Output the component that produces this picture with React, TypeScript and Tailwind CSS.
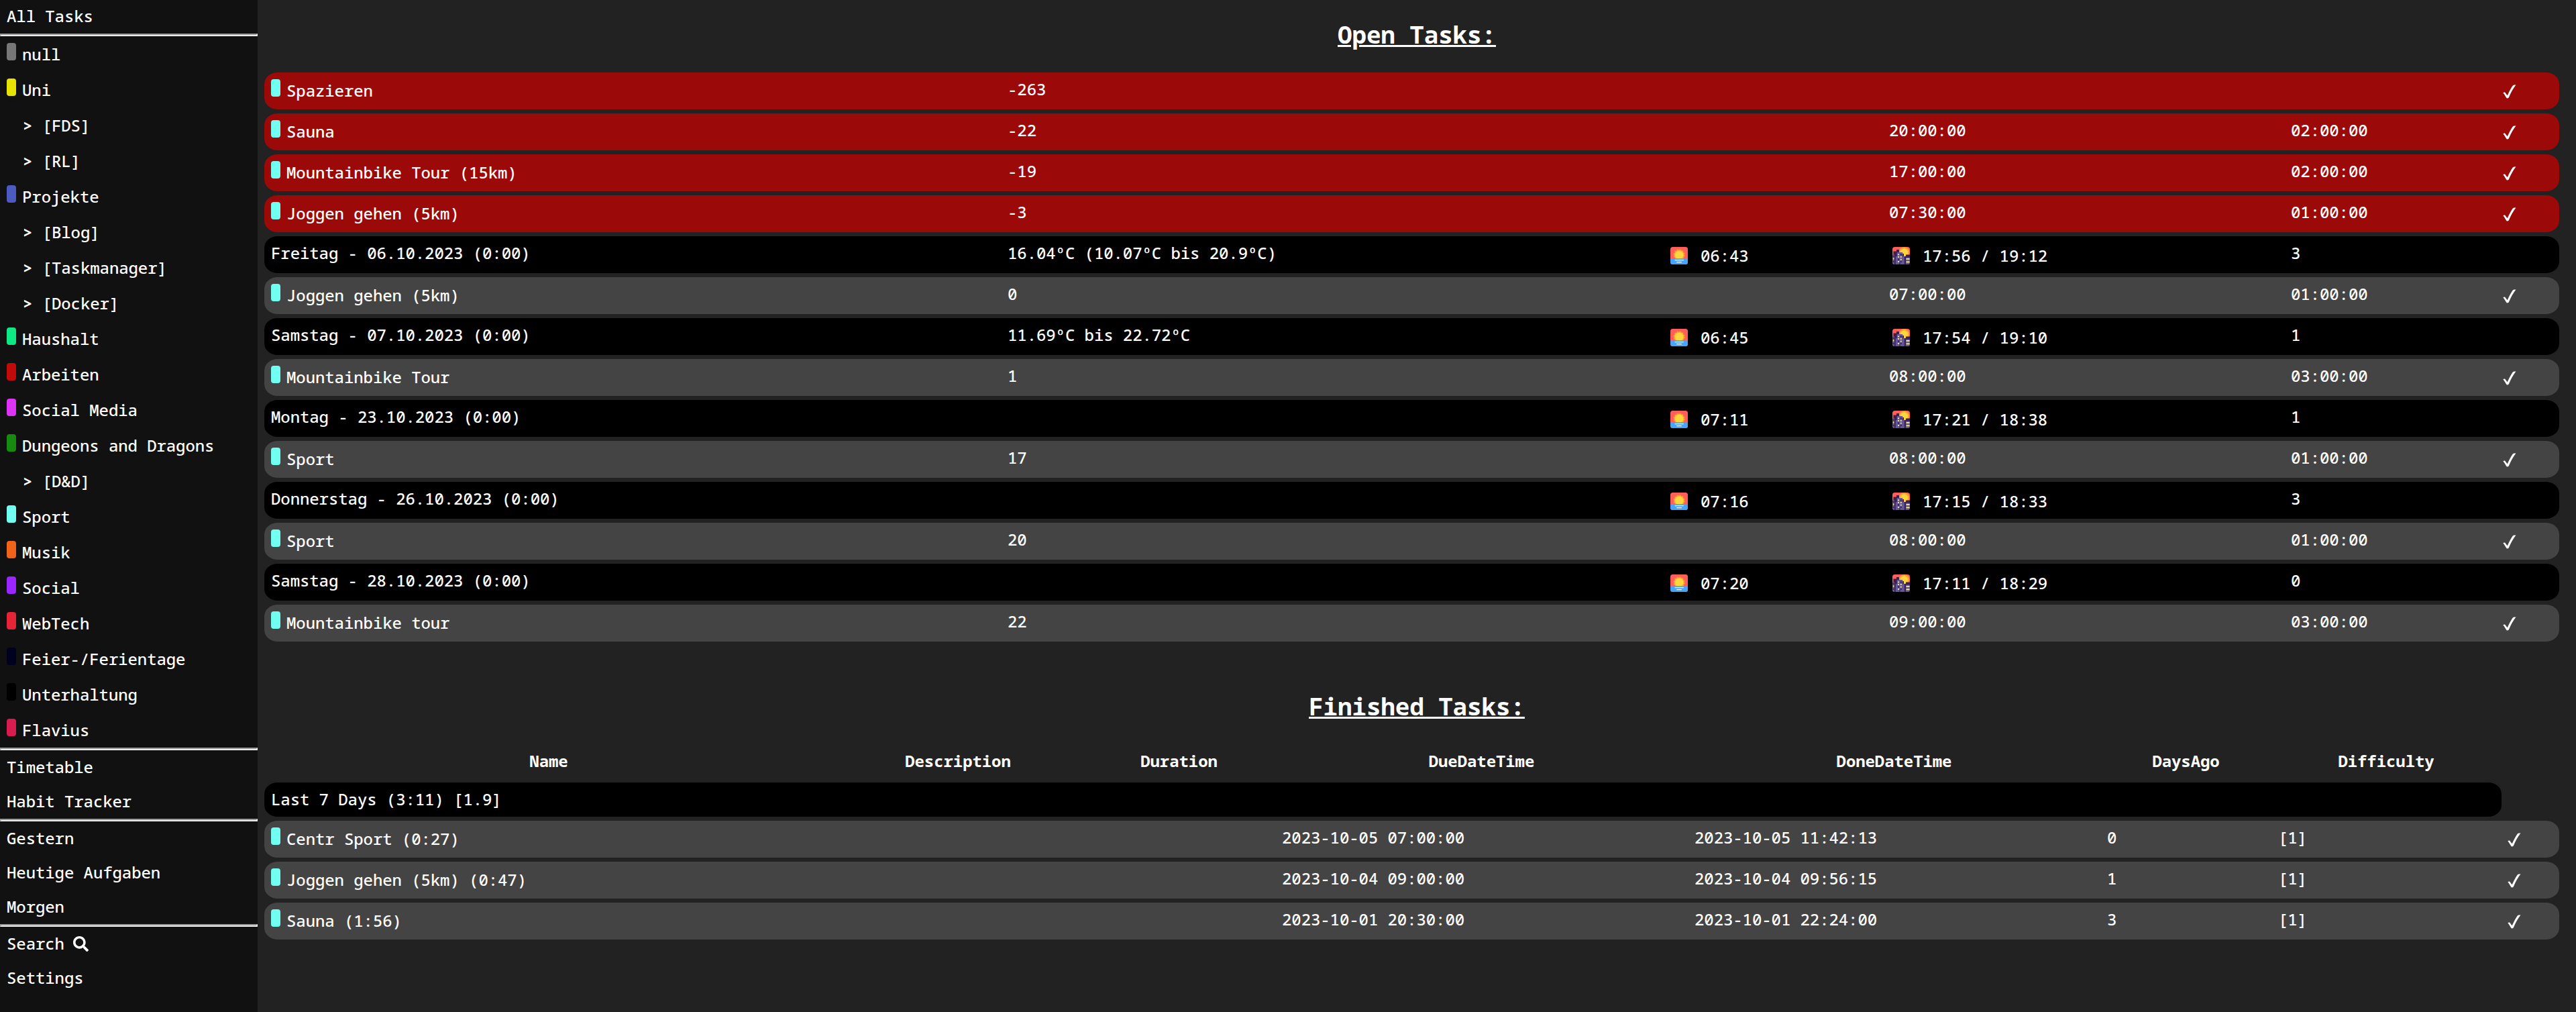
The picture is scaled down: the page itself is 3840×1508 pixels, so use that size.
import type { ReactNode } from "react";
import { FaSearch } from "react-icons/fa";

const SPORT = "bg-[#70fff0]";

type Category = { label: string; color?: string };

const categories: Category[] = [
  { label: "null", color: "bg-[#777777]" },
  { label: "Uni", color: "bg-[#e8e400]" },
  { label: "[FDS]" },
  { label: "[RL]" },
  { label: "Projekte", color: "bg-[#4b5bc0]" },
  { label: "[Blog]" },
  { label: "[Taskmanager]" },
  { label: "[Docker]" },
  { label: "Haushalt", color: "bg-[#0ee884]" },
  { label: "Arbeiten", color: "bg-[#c20a0a]" },
  { label: "Social Media", color: "bg-[#dd33f5]" },
  { label: "Dungeons and Dragons", color: "bg-[#178a10]" },
  { label: "[D&D]" },
  { label: "Sport", color: SPORT },
  { label: "Musik", color: "bg-[#f2631a]" },
  { label: "Social", color: "bg-[#9b26ff]" },
  { label: "WebTech", color: "bg-[#e62437]" },
  { label: "Feier-/Ferientage", color: "bg-[#00001f]" },
  { label: "Unterhaltung", color: "bg-black" },
  { label: "Flavius", color: "bg-[#d91c50]" },
];

type Open =
  | { kind: "late" | "task"; name: string; days: string; time?: string; duration?: string }
  | { kind: "day"; name: string; weather?: string; sunrise: string; sunset: string; count: string };

const open: Open[] = [
  { kind: "late", name: "Spazieren", days: "-263" },
  { kind: "late", name: "Sauna", days: "-22", time: "20:00:00", duration: "02:00:00" },
  { kind: "late", name: "Mountainbike Tour (15km)", days: "-19", time: "17:00:00", duration: "02:00:00" },
  { kind: "late", name: "Joggen gehen (5km)", days: "-3", time: "07:30:00", duration: "01:00:00" },
  { kind: "day", name: "Freitag - 06.10.2023 (0:00)", weather: "16.04ºC (10.07ºC bis 20.9ºC)", sunrise: "06:43", sunset: "17:56 / 19:12", count: "3" },
  { kind: "task", name: "Joggen gehen (5km)", days: "0", time: "07:00:00", duration: "01:00:00" },
  { kind: "day", name: "Samstag - 07.10.2023 (0:00)", weather: "11.69ºC bis 22.72ºC", sunrise: "06:45", sunset: "17:54 / 19:10", count: "1" },
  { kind: "task", name: "Mountainbike Tour", days: "1", time: "08:00:00", duration: "03:00:00" },
  { kind: "day", name: "Montag - 23.10.2023 (0:00)", sunrise: "07:11", sunset: "17:21 / 18:38", count: "1" },
  { kind: "task", name: "Sport", days: "17", time: "08:00:00", duration: "01:00:00" },
  { kind: "day", name: "Donnerstag - 26.10.2023 (0:00)", sunrise: "07:16", sunset: "17:15 / 18:33", count: "3" },
  { kind: "task", name: "Sport", days: "20", time: "08:00:00", duration: "01:00:00" },
  { kind: "day", name: "Samstag - 28.10.2023 (0:00)", sunrise: "07:20", sunset: "17:11 / 18:29", count: "0" },
  { kind: "task", name: "Mountainbike tour", days: "22", time: "09:00:00", duration: "03:00:00" },
];

const finished = [
  { name: "Centr Sport (0:27)", due: "2023-10-05 07:00:00", done: "2023-10-05 11:42:13", ago: "0" },
  { name: "Joggen gehen (5km) (0:47)", due: "2023-10-04 09:00:00", done: "2023-10-04 09:56:15", ago: "1" },
  { name: "Sauna (1:56)", due: "2023-10-01 20:30:00", done: "2023-10-01 22:24:00", ago: "3" },
];

const headers = ["Name", "Description", "Duration", "DueDateTime", "DoneDateTime", "DaysAgo", "Difficulty"];

const finishedCols = "grid grid-cols-[848px_372px_287px_615px_615px_255px_342px_1fr]";
const rowBase = "border-y-[3px] border-[#222222] rounded-[20px]";

function Divider() {
  return <div className="h-1 border-2 border-t-[#9a9a9a] border-l-[#9a9a9a] border-r-[#ededed] border-b-[#ededed]" />;
}

function Pill({ color }: { color: string }) {
  return <span className={`mt-[10px] mr-[9px] h-[26px] w-[14px] shrink-0 rounded-[4px] ${color}`} />;
}

function SideLink({ children }: { children: ReactNode }) {
  return <div className="flex h-[51px] items-start pl-[10px] leading-[49px]">{children}</div>;
}

function Heading({ children }: { children: ReactNode }) {
  return (
    <h1 className="-mr-[15px] text-center text-[36px] leading-[49px] font-bold tracking-[-0.15px] underline decoration-[3px] underline-offset-2">
      {children}
    </h1>
  );
}

function Check() {
  return (
    <svg width="20" height="21" viewBox="0 0 20 21" className="mt-[18px] ml-[10px]" fill="#fff">
      <path d="M.4 12.6C1.2 11.3 3.2 11.2 4.1 12.9L6.7 16.3C9.2 10.6 11.8 5.9 14.4 2C15.4.6 16.7.4 19.4.5C15.2 6 12 11.6 9.3 18.3C8.4 20.9 6 21.2 4.9 19.3C3.5 16.8 2.3 14.6.4 12.6Z" />
    </svg>
  );
}

function Sunrise() {
  return (
    <svg width="26" height="26" viewBox="0 0 26 26" className="mt-4 shrink-0">
      <clipPath id="riseClip">
        <rect width="26" height="26" rx="3.5" />
      </clipPath>
      <g clipPath="url(#riseClip)">
        <rect width="26" height="26" fill="#ff5f58" />
        <circle cx="13" cy="12" r="7.6" fill="none" stroke="#ffa032" strokeWidth="1.8" strokeDasharray="2.6 1.4" />
        <circle cx="13" cy="12" r="7.4" fill="#ffb02e" />
        <circle cx="13" cy="12" r="6.2" fill="#fcd53f" />
        <rect y="17.3" width="26" height="9" fill="#46a4fb" />
        <path d="M7 19.6h12.4M9.6 22.6h6.8" stroke="#f4f4f4" strokeWidth="1.1" strokeLinecap="round" />
      </g>
    </svg>
  );
}

function Sunset() {
  return (
    <svg width="26" height="26" viewBox="0 0 26 26" className="mt-4 shrink-0">
      <clipPath id="setClip">
        <rect width="26" height="26" rx="3.5" />
      </clipPath>
      <g clipPath="url(#setClip)">
        <rect width="26" height="26" fill="#ff5f58" />
        <circle cx="17.5" cy="8" r="8" fill="#ffa032" />
        <circle cx="17.5" cy="8" r="5.8" fill="#fcd53f" />
        <path d="M1.5 26V6.5H6V4h4v6h7v4h3v-2.5h6V26z" fill="#3b1f4f" />
        <path d="M0 11.5h3.6V26H0zM20 15.5h6V26h-6z" fill="#63569b" />
        <path d="M4.6 26V14h2V8h8.6v6h2.6v12z" fill="#63569b" />
        <path d="M3.6 12v14M11 23v3" stroke="#3b1f4f" strokeWidth="1.2" />
        <path d="M8 10.4h2v1.8H8zM11.8 14h2v1.8h-2zM8 14h2v1.8H8zM11.8 17.8h2v1.8h-2zM8 21h2v1.8H8zM.8 16.5h1.6v2H.8zM20.6 17h5v1.8h-5zM20.6 21.4h5v1.8h-5z" fill="#fff478" />
        <path d="M11.8 10.4h2v1.8h-2zM8 17.6h2v1.8H8zM11.8 21h2v1.8h-2zM.8 13h1.6v1.8H.8zM.8 21h1.6v1.8H.8z" fill="#321b41" />
      </g>
    </svg>
  );
}

function NameCell({ name }: { name: string }) {
  return (
    <div className="flex items-start pl-[10px] leading-[53px]">
      <Pill color={SPORT} />
      {name}
    </div>
  );
}

function Cell({ children }: { children?: ReactNode }) {
  return <div className="pl-[10px] leading-[49px]">{children}</div>;
}

function OpenRow({ row }: { row: Open }) {
  const tone = row.kind === "late" ? "bg-[#9c0909]" : row.kind === "day" ? "bg-black" : "bg-[#444444]";
  return (
    <div className={`grid h-[61px] grid-cols-[1098px_983px_331px_599px_1fr] ${rowBase} ${tone}`}>
      {row.kind === "day" ? (
        <>
          <Cell>{row.name}</Cell>
          <Cell>{row.weather}</Cell>
          <div className="flex items-start pl-[15px] leading-[57px]">
            <Sunrise />
            <span className="ml-[19px]">{row.sunrise}</span>
          </div>
          <div className="flex items-start pl-[15px] leading-[57px]">
            <Sunset />
            <span className="ml-[19px]">{row.sunset}</span>
          </div>
          <Cell>{row.count}</Cell>
        </>
      ) : (
        <>
          <NameCell name={row.name} />
          <Cell>{row.days}</Cell>
          <div />
          <Cell>{row.time}</Cell>
          <div className="flex items-start">
            <div className="w-[316px]">
              <Cell>{row.duration}</Cell>
            </div>
            <Check />
          </div>
        </>
      )}
    </div>
  );
}

export default function App() {
  return (
    <div className="flex h-[1508px] w-[3840px] overflow-hidden bg-[#222222] font-['Noto_Sans_Mono','DejaVu_Sans_Mono',monospace] text-2xl font-medium tracking-[-0.08px] whitespace-pre text-white">
      <aside className="w-[384px] shrink-0 bg-[#111111]">
        <div className="h-[50px] pl-[10px] leading-[47px]">All Tasks</div>
        <Divider />
        {categories.map((c) =>
          c.color ? (
            <div key={c.label} className="flex h-[53px] items-start pl-[10px] leading-[53px]">
              <Pill color={c.color} />
              {c.label}
            </div>
          ) : (
            <div key={c.label} className="h-[53px] pl-[34px] leading-[53px]">
              <span className="font-bold">&gt;</span> {c.label}
            </div>
          ),
        )}
        <Divider />
        <SideLink>Timetable</SideLink>
        <SideLink>Habit Tracker</SideLink>
        <Divider />
        <SideLink>Gestern</SideLink>
        <SideLink>Heutige Aufgaben</SideLink>
        <SideLink>Morgen</SideLink>
        <Divider />
        <SideLink>
          Search
          <FaSearch className="mt-[14px] ml-[13px] h-[23px] w-[23px]" />
        </SideLink>
        <SideLink>Settings</SideLink>
      </aside>

      <main className="flex-1 pt-[27px] pr-[25px] pl-[10px]">
        <Heading>Open Tasks:</Heading>
        <section className="pt-[29px] pb-[69px]">
          {open.map((row, i) => (
            <OpenRow key={i} row={row} />
          ))}
        </section>

        <Heading>Finished Tasks:</Heading>
        <section className="pt-8">
          <div className={`${finishedCols} h-[54px] text-center leading-[49px] font-bold`}>
            {headers.map((h) => (
              <div key={h}>{h}</div>
            ))}
          </div>
          <div className={`h-[57px] w-[3335px] bg-black ${rowBase}`}>
            <Cell>Last 7 Days (3:11) [1.9]</Cell>
          </div>
          {finished.map((f) => (
            <div key={f.name} className={`${finishedCols} h-[61px] bg-[#444444] ${rowBase}`}>
              <NameCell name={f.name} />
              <div />
              <div />
              <Cell>{f.due}</Cell>
              <Cell>{f.done}</Cell>
              <Cell>{f.ago}</Cell>
              <Cell>[1]</Cell>
              <Check />
            </div>
          ))}
        </section>
      </main>
    </div>
  );
}
